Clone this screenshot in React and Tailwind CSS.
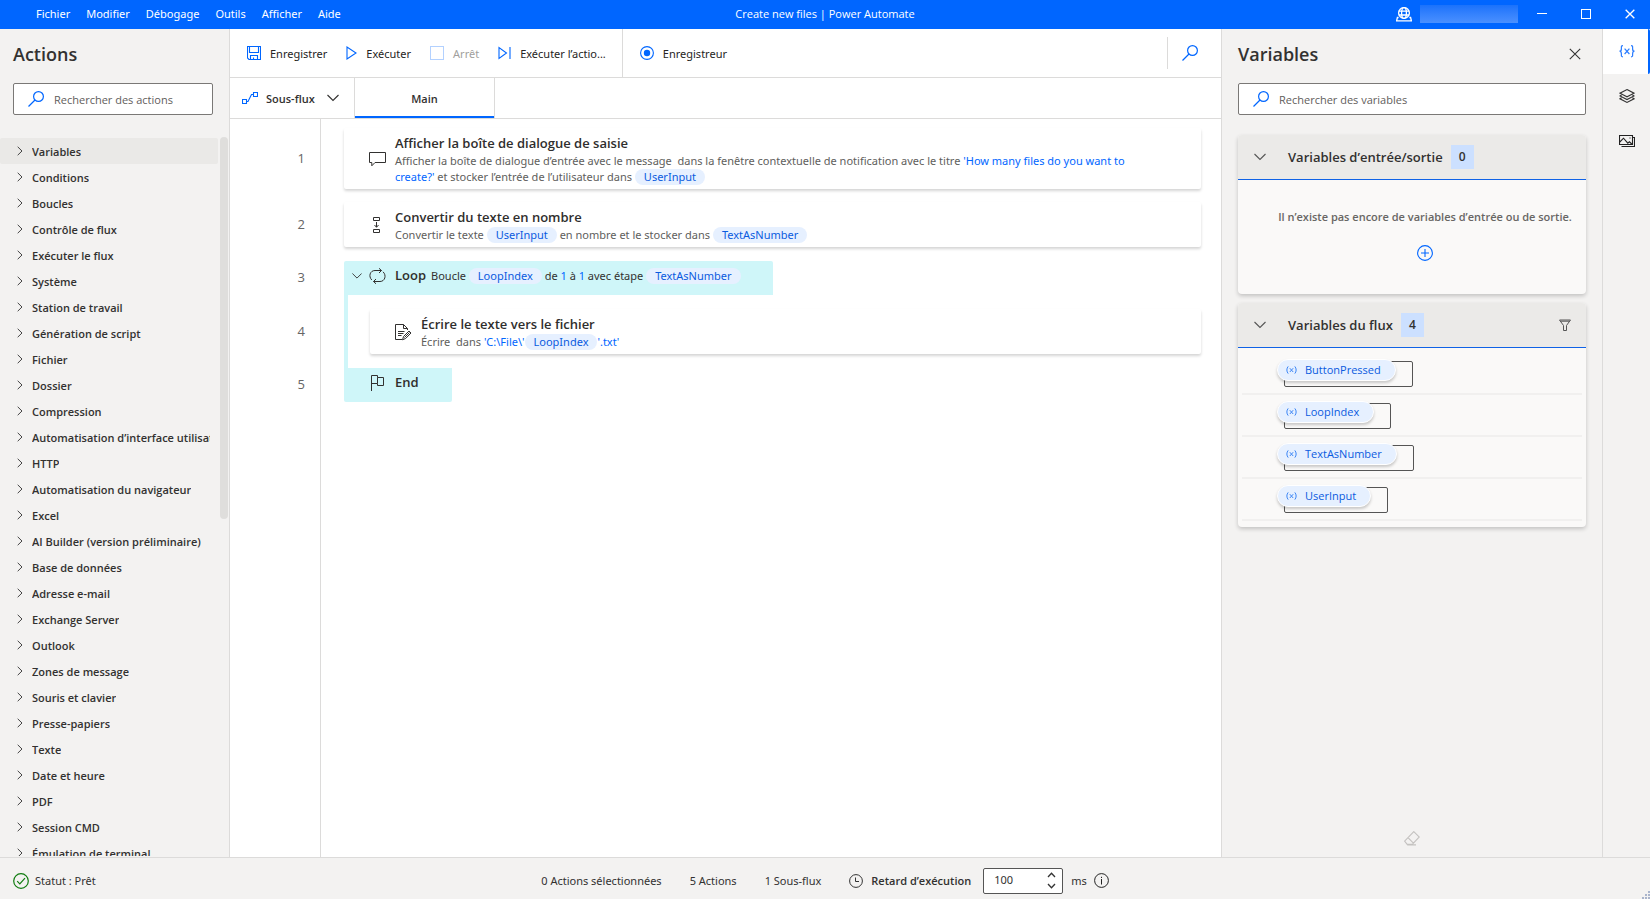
import React from "react";

const Svg = ({ w = 16, h = 16, className = "", children, ...rest }) => (
  <svg
    width={w}
    height={h}
    viewBox={`0 0 ${w} ${h}`}
    fill="none"
    stroke="currentColor"
    strokeWidth="1"
    aria-hidden="true"
    className={`shrink-0 ${className}`}
    {...rest}
  >
    {children}
  </svg>
);

const SearchIcon = ({ className = "" }) => (
  <Svg className={`text-[#0066ff] ${className}`} strokeWidth="1.2">
    <circle cx="10.5" cy="5.5" r="4.9" />
    <path d="M7 9 0.5 15.5" />
  </Svg>
);
const ChevronDown = ({ className = "" }) => (
  <Svg w={12} h={8} className={className} strokeWidth="1.1">
    <path d="M0.5 1 6 6.5 11.5 1" />
  </Svg>
);
const ChevronRight = () => (
  <Svg w={6} h={10} className="text-[#444]">
    <path d="M0.7 0.8 5 5 0.7 9.2" />
  </Svg>
);
const SaveIcon = () => (
  <Svg w={14} h={14} className="text-[#0066ff]" strokeWidth="1.1">
    <path d="M0.5 0.5H13.5V13.5H2L0.5 12ZM2.5 0.5V6.5H11.5V0.5M3.5 13.5V9.5H10.5V13.5M6.5 13.5V11.5" />
  </Svg>
);
const PlayIcon = () => (
  <Svg w={11} h={14} className="text-[#0066ff]" strokeWidth="1.1">
    <path d="M1 1V13L10 7Z" />
  </Svg>
);
const StopIcon = () => (
  <Svg w={14} h={14} className="text-[#b3d1ff]">
    <rect x="0.5" y="0.5" width="13" height="13" />
  </Svg>
);
const StepIcon = () => (
  <Svg w={13} h={14} className="text-[#0066ff]" strokeWidth="1.1">
    <path d="M1 1.5V12.5L8.5 7ZM12 1V13" />
  </Svg>
);
const RecordIcon = () => (
  <Svg w={14} h={14} className="text-[#0066ff]" strokeWidth="1.1">
    <circle cx="7" cy="7" r="6.4" />
    <circle cx="7" cy="7" r="3.2" fill="currentColor" stroke="none" />
  </Svg>
);
const SubflowIcon = () => (
  <Svg w={16} h={13} className="text-[#0066ff]" strokeWidth="1.1">
    <path d="M0.5 7.5H4.5V11.5H0.5ZM11.5 0.5H15.5V4.5H11.5ZM4.5 9.5H6L9.5 2.5H11.5" />
  </Svg>
);
const MessageIcon = () => (
  <Svg w={17} h={15}>
    <path d="M0.5 0.5H16.5V10.5H6L2.8 13.8V10.5H0.5Z" />
  </Svg>
);
const ConvertIcon = () => (
  <Svg w={17} h={17}>
    <path d="M4.5 0.5H10.5V3.5H4.5ZM4.5 12.5H10.5V15.5H4.5ZM7.5 5V10M5.5 8 7.5 10.3 9.5 8" />
  </Svg>
);
const LoopIcon = () => (
  <Svg w={17} h={16}>
    <path d="M2.8 12C-0.8 8.4 1 2.5 6 2.5H12.5M10 0.3 12.5 2.5 10 5M14 3.8C17.8 7.2 16 13.5 11 13.5H4.5M7 11 4.5 13.5 7 15.8" />
  </Svg>
);
const WriteIcon = () => (
  <Svg w={17} h={17}>
    <path d="M7 15.5H0.5V0.5H8.5L12.5 4.5V6M8.5 0.5V4.5H12.5M3 7.5H9.5M3 9.5H8.5M3 11.5H6.5" />
    <path d="M7.5 15.8 8.6 12.4 14 7 16 9 10.6 14.5ZM9.5 13.5 14.5 8.5" />
  </Svg>
);
const FlagIcon = () => (
  <Svg w={17} h={16}>
    <path d="M2.5 16V0.5H8.5V2.5H14.5V10.5H8.5V8.5H2.5M8.5 2.5V8.5" />
  </Svg>
);
const GlobeIcon = () => (
  <Svg w={16} h={15} className="text-white" strokeWidth="1.3">
    <circle cx="8" cy="6" r="5.4" />
    <ellipse cx="8" cy="6" rx="2.4" ry="5.4" />
    <path d="M2.7 4.2H13.3M2.7 8H13.3M2.6 10.5H1.4L0.6 13.8H15.4L14.6 10.5H13.4" />
  </Svg>
);
const CloseIcon = ({ w = 12, className = "" }) => (
  <svg width={w} height={w} viewBox="0 0 12 12" fill="none" stroke="currentColor" strokeWidth={w < 12 ? "1.6" : "1.1"} aria-hidden="true" className={className}>
    <path d="M0.8 0.8 11.2 11.2M11.2 0.8 0.8 11.2" />
  </svg>
);
const FilterIcon = () => (
  <Svg w={12} h={12} className="text-[#555]">
    <path d="M0.5 1H11.5L7.5 6.5V11.5H4.5V6.5ZM1.5 2.2H10.5" />
  </Svg>
);
const PlusCircle = () => (
  <Svg className="text-[#0066ff]" strokeWidth="1.1">
    <circle cx="8" cy="8" r="7.4" />
    <path d="M4 8H12M8 4V12" />
  </Svg>
);
const BracesIcon = () => (
  <Svg w={16} h={13} className="text-[#2b7dff]" strokeWidth="1.2">
    <path d="M4 0.6C2 0.6 2.4 1.6 2.4 3.4S2.4 6.2 0.5 6.2C2.4 6.2 2.4 7.2 2.4 9S2 11.8 4 11.8M12 0.6C14 0.6 13.6 1.6 13.6 3.4S13.6 6.2 15.5 6.2C13.6 6.2 13.6 7.2 13.6 9S14 11.8 12 11.8" />
    <path d="M5.6 3.6 10.4 9M10.4 3.6 5.6 9" />
  </Svg>
);
const ParenXIcon = () => (
  <Svg w={11} h={8} className="text-[#3b85f5]">
    <path d="M2.2 0.4C0.4 2.4 0.4 5.6 2.2 7.6M8.8 0.4C10.6 2.4 10.6 5.6 8.8 7.6M3.8 2.2 7.2 6M7.2 2.2 3.8 6" />
  </Svg>
);
const LayersIcon = () => (
  <Svg w={16} h={14} className="text-[#333]" strokeWidth="1.1">
    <path d="M8 0.6 15 4.2 8 7.8 1 4.2ZM2.5 6 1 7 8 10.6 15 7 13.5 6M2.5 8.8 1 9.8 8 13.4 15 9.8 13.5 8.8" />
  </Svg>
);
const ImagesIcon = () => (
  <Svg w={16} h={12} className="text-[#222]" strokeWidth="1.1">
    <path d="M0.5 0.5H13.5V9.5H0.5ZM2.5 11.5H15.5V2.5H14" />
    <path d="M0.8 7 4.5 3.2 8.8 8.2 10.4 6.8 12.8 9M11 2.5V3.5" />
  </Svg>
);
const EraserIcon = () => (
  <Svg w={16} h={15} className="text-[#c4c2c0]" strokeWidth="1.1">
    <path d="M9.8 0.6 15.3 6 8.2 13.4H3.2L0.6 10.2ZM4 6.6 9.4 12.2M3.2 13.9H12" />
  </Svg>
);
const CheckCircle = () => (
  <Svg className="text-[#107c10]" strokeWidth="1.2">
    <circle cx="8" cy="8" r="7.3" />
    <path d="M4.2 8.2 6.8 10.8 12 5.2" />
  </Svg>
);
const ClockIcon = () => (
  <Svg w={14} h={14} className="text-[#333]">
    <circle cx="7" cy="7" r="6.4" />
    <path d="M6.5 3.5V7.5H10" />
  </Svg>
);
const InfoIcon = () => (
  <Svg w={15} h={15} className="text-[#222]">
    <circle cx="7.5" cy="7.5" r="6.9" />
    <path d="M7.5 6V11.5M7.5 3.8V5" />
  </Svg>
);

const menus = ["Fichier", "Modifier", "Débogage", "Outils", "Afficher", "Aide"];

const groups = [
  "Variables",
  "Conditions",
  "Boucles",
  "Contrôle de flux",
  "Exécuter le flux",
  "Système",
  "Station de travail",
  "Génération de script",
  "Fichier",
  "Dossier",
  "Compression",
  "Automatisation d’interface utilisateur",
  "HTTP",
  "Automatisation du navigateur",
  "Excel",
  "AI Builder (version préliminaire)",
  "Base de données",
  "Adresse e-mail",
  "Exchange Server",
  "Outlook",
  "Zones de message",
  "Souris et clavier",
  "Presse-papiers",
  "Texte",
  "Date et heure",
  "PDF",
  "Session CMD",
  "Émulation de terminal",
];

const flowVariables = ["ButtonPressed", "LoopIndex", "TextAsNumber", "UserInput"];

const Pill = ({ children }) => (
  <span className="inline-block rounded-full bg-[#e6f0ff] px-[9px] leading-4 text-[#0a5be0]">{children}</span>
);
const Blue = ({ children }) => <span className="text-[#0066ff]">{children}</span>;

const SearchBox = ({ id, label }) => (
  <div className="flex h-8 items-center gap-[10px] rounded-xs border border-[#7a7876] bg-white pl-[14px]">
    <SearchIcon />
    <input
      id={id}
      type="search"
      aria-label={label}
      placeholder={label}
      className="h-full w-full min-w-0 bg-transparent outline-none placeholder:text-[#5f5d5b]"
    />
  </div>
);

const Line = ({ n, className = "", children }) => (
  <div className={`flex ${className}`}>
    <span className="flex w-[90px] shrink-0 items-center justify-end pr-[15px] text-[13px] text-[#666]">
      {n}
    </span>
    <div className="min-w-0 flex-1 pr-5 pl-6">{children}</div>
  </div>
);

const Card = ({ icon, title, children }) => (
  <div className="flex items-center rounded-xs bg-white pt-[5px] pr-10 pb-1 pl-[25px] shadow-[0_2px_3px_rgba(0,0,0,0.17)]">
    {icon}
    <div className="ml-[9px] min-w-0">
      <h3 className="text-[13px] leading-5 font-semibold text-[#2f2e2d]">{title}</h3>
      <p className="font-['Noto_Sans','Open_Sans',sans-serif] leading-4 text-[#605e5c]">{children}</p>
    </div>
  </div>
);

const ToolButton = ({ icon, children, disabled }) => (
  <button type="button" disabled={disabled} className="flex items-center gap-[9px] text-[#252423] disabled:text-[#a19f9d]">
    {icon}
    <span className="pt-[2px]">{children}</span>
  </button>
);

const VarPanel = ({ title, count, action, children }) => (
  <section className="overflow-hidden rounded-sm bg-[#faf9f8] shadow-[0_2px_4px_rgba(0,0,0,0.2)]">
    <header className="flex h-[45px] items-center border-b border-[#0f62e6] bg-[#ebeae8] pr-[15px] pl-4">
      <button type="button" aria-label={`Réduire ${title}`} className="text-[#555]">
        <ChevronDown />
      </button>
      <h3 className="ml-[22px] pt-px text-[13px] font-semibold text-[#323130]">{title}</h3>
      <span className="ml-2 flex h-6 w-[23px] items-center justify-center bg-[#cce0ff] text-xs font-semibold text-[#323130]">
        {count}
      </span>
      <span className="ml-auto flex">{action}</span>
    </header>
    {children}
  </section>
);

export default function App() {
  return (
    <div className="flex h-screen flex-col overflow-hidden bg-[#f3f2f1] font-['Open_Sans','Noto_Sans',sans-serif] text-[11px] text-[#323130]">
      <header className="grid h-[29px] shrink-0 grid-cols-[1fr_auto_1fr] items-center bg-[#0066ff] pb-px text-white">
        <nav className="flex gap-4 pl-9 font-['Noto_Sans','Open_Sans',sans-serif]">
          {menus.map((m) => (
            <button key={m} type="button">
              {m}
            </button>
          ))}
        </nav>
        <h1>Create new files | Power Automate</h1>
        <div className="flex items-center justify-end pr-[15px]">
          <GlobeIcon />
          <span className="ml-2 h-[18px] w-[98px] bg-linear-to-b from-[#1a72fb] to-[#4a90ff]" />
          <button type="button" aria-label="Réduire" className="ml-[19px]">
            <Svg w={10} h={10}>
              <path d="M0 4.5H10" />
            </Svg>
          </button>
          <button type="button" aria-label="Agrandir" className="ml-[34px]">
            <Svg w={10} h={10}>
              <rect x="0.5" y="0.5" width="9" height="9" />
            </Svg>
          </button>
          <button type="button" aria-label="Fermer" className="ml-[34px]">
            <CloseIcon w={10} />
          </button>
        </div>
      </header>

      <div className="flex min-h-0 flex-1">
        <aside className="flex w-[230px] shrink-0 flex-col border-r border-[#dcdbda]">
          <h2 className="px-[13px] pt-3 text-lg leading-[26px] font-semibold">Actions</h2>
          <div className="px-[13px] pt-4">
            <div className="w-[200px]">
              <SearchBox id="action-search" label="Rechercher des actions" />
            </div>
          </div>
          <div className="mt-[22px] mb-px flex min-h-0 flex-1 overflow-hidden">
            <ul className="min-w-0 flex-1 pt-px">
              {groups.map((g, i) => (
                <li key={g}>
                  <button
                    type="button"
                    className={`flex h-[26px] w-full items-center gap-[9px] pr-2 pl-[17px] text-left font-semibold ${i === 0 ? "rounded-xs bg-[#eae9e7]" : ""}`}
                  >
                    <ChevronRight />
                    <span className="overflow-hidden pt-[2px] whitespace-nowrap">{g}</span>
                  </button>
                </li>
              ))}
            </ul>
            <div className="ml-[2px] h-[382px] w-2 shrink-0 rounded-full bg-[#dfdedc]" />
            <div className="w-px shrink-0" />
          </div>
        </aside>

        <main className="flex min-w-0 flex-1 flex-col bg-white">
          <div className="flex h-[49px] shrink-0 items-stretch border-b border-[#dcdbda] font-['Noto_Sans','Open_Sans',sans-serif]">
            <div className="flex items-center gap-[19px] border-r border-[#dcdbda] pr-4 pl-[17px]">
              <ToolButton icon={<SaveIcon />}>Enregistrer</ToolButton>
              <ToolButton icon={<PlayIcon />}>Exécuter</ToolButton>
              <ToolButton icon={<StopIcon />} disabled>
                Arrêt
              </ToolButton>
              <ToolButton icon={<StepIcon />}>Exécuter l’actio...</ToolButton>
            </div>
            <div className="flex items-center pl-[17px]">
              <ToolButton icon={<RecordIcon />}>Enregistreur</ToolButton>
            </div>
            <div className="my-2 ml-auto flex items-center border-l border-[#dcdbda] pr-[23px] pl-[14px]">
              <button type="button" aria-label="Rechercher dans le flux">
                <SearchIcon />
              </button>
            </div>
          </div>

          <div className="flex h-[41px] shrink-0 items-stretch border-b border-[#dcdbda]">
            <button type="button" className="flex w-[125px] items-center gap-2 border-r border-[#dcdbda] pl-3 font-semibold">
              <SubflowIcon />
              <span className="pt-[2px]">Sous-flux</span>
              <ChevronDown className="ml-1" />
            </button>
            <div className="flex w-[140px] border-r border-[#dcdbda]">
              <button type="button" className="w-full border-b-2 border-[#0066ff] pt-1 font-semibold">
                Main
              </button>
            </div>
          </div>

          <div className="flex min-h-0 flex-1 bg-[linear-gradient(#dcdbda,#dcdbda)] bg-[length:1px_100%] bg-[position:90px_0] bg-no-repeat">
            <div className="flex min-w-0 flex-1 flex-col pt-[9px]">
              <Line n={1}>
                <Card icon={<MessageIcon />} title="Afficher la boîte de dialogue de saisie">
                  Afficher la boîte de dialogue d’entrée avec le message&nbsp; dans la fenêtre contextuelle de
                  notification avec le titre <Blue>'How many files do you want to create?'</Blue> et stocker
                  l’entrée de l’utilisateur dans <Pill>UserInput</Pill>
                </Card>
              </Line>
              <Line n={2} className="mt-[13px]">
                <Card icon={<ConvertIcon />} title="Convertir du texte en nombre">
                  Convertir le texte <Pill>UserInput</Pill> en nombre et le stocker dans <Pill>TextAsNumber</Pill>
                </Card>
              </Line>
              <Line n={3} className="mt-[14px]">
                <div className="flex h-[34px] w-[429px] items-center rounded-t-xs bg-[#cff6f9] pb-1 pl-2">
                  <button type="button" aria-label="Réduire la boucle" className="flex w-[17px] text-[#333]">
                    <ChevronDown className="w-[10px]" />
                  </button>
                  <LoopIcon />
                  <h3 className="ml-[9px] text-[13px] font-semibold text-[#2f2e2d]">Loop</h3>
                  <p className="ml-[5px] font-['Noto_Sans','Open_Sans',sans-serif] leading-4 whitespace-nowrap">
                    Boucle <Pill>LoopIndex</Pill> de <Blue>1</Blue> à <Blue>1</Blue> avec étape{" "}
                    <Pill>TextAsNumber</Pill>
                  </p>
                </div>
              </Line>
              <Line n={4}>
                <div className="border-l-4 border-[#cff6f9] py-[14px] pl-[22px]">
                  <Card icon={<WriteIcon />} title="Écrire le texte vers le fichier">
                    Écrire&nbsp; dans <Blue>'C:\File\'</Blue>
                    <Pill>LoopIndex</Pill>
                    <Blue>'.txt'</Blue>
                  </Card>
                </div>
              </Line>
              <Line n={5}>
                <div className="flex h-[34px] w-[108px] items-center rounded-b-xs bg-[#cff6f9] pb-1 pl-[25px]">
                  <FlagIcon />
                  <h3 className="ml-[9px] text-[13px] font-semibold text-[#2f2e2d]">End</h3>
                </div>
              </Line>
            </div>
          </div>
        </main>

        <aside className="flex w-[382px] shrink-0 flex-col border-x border-[#dcdbda] px-4">
          <div className="flex items-center justify-between pt-3 pr-[5px]">
            <h2 className="text-lg leading-[26px] font-semibold">Variables</h2>
            <button type="button" aria-label="Fermer le volet" className="text-[#333]">
              <CloseIcon />
            </button>
          </div>
          <div className="pt-4">
            <SearchBox id="variable-search" label="Rechercher des variables" />
          </div>
          <div className="mt-5 flex flex-col gap-[9px]">
            <VarPanel title="Variables d’entrée/sortie" count={0}>
              <div className="flex h-[114px] flex-col items-center gap-[19px] pt-7 pl-[26px]">
                <p className="leading-[18px] font-semibold whitespace-nowrap text-[#686664]">
                  Il n’existe pas encore de variables d’entrée ou de sortie.
                </p>
                <button type="button" aria-label="Ajouter une variable">
                  <PlusCircle />
                </button>
              </div>
            </VarPanel>
            <VarPanel
              title="Variables du flux"
              count={4}
              action={
                <button type="button" aria-label="Filtrer">
                  <FilterIcon />
                </button>
              }
            >
              <ul className="px-1 pt-[5px] pb-[6px]">
                {flowVariables.map((v) => (
                  <li key={v} className="flex h-[42px] items-start border-b-2 border-[#f1f0ef] pt-[6px] pl-[35px]">
                    <div className="relative">
                      <span className="absolute top-[2px] -right-[17px] left-[7px] h-[26px] rounded-xs border border-[#555]" />
                      <button
                        type="button"
                        className="relative flex h-[22px] items-center gap-2 rounded-full border border-white bg-[#e6f0ff] pr-[14px] pl-2 text-[#0a5be0] shadow-[0_2px_3px_rgba(0,0,0,0.2)]"
                      >
                        <ParenXIcon />
                        {v}
                      </button>
                    </div>
                  </li>
                ))}
              </ul>
            </VarPanel>
          </div>
          <button type="button" disabled aria-label="Effacer les valeurs" className="mt-auto mb-[11px] self-center">
            <EraserIcon />
          </button>
        </aside>

        <nav className="flex w-[47px] shrink-0 flex-col">
          <button type="button" aria-label="Variables" className="flex h-[45px] items-center justify-center rounded-r-xs border-r-2 border-[#0066ff] bg-white pb-px pl-[2px]">
            <BracesIcon />
          </button>
          <button type="button" aria-label="Éléments d’interface" className="flex h-[45px] items-center justify-center pb-[2px] pl-px">
            <LayersIcon />
          </button>
          <button type="button" aria-label="Images" className="flex h-[45px] items-center justify-center pb-[2px] pl-px">
            <ImagesIcon />
          </button>
        </nav>
      </div>

      <footer className="relative grid h-[42px] shrink-0 grid-cols-[1fr_auto_1fr] items-center border-t border-[#dcdbda] pt-1 font-['Noto_Sans','Open_Sans',sans-serif]">
        <div className="flex items-center gap-[6px] pl-[13px]">
          <CheckCircle />
          <span className="pt-px">Statut : Prêt</span>
        </div>
        <div className="flex items-center">
          <span className="pt-px">0 Actions sélectionnées</span>
          <span className="ml-7 pt-px">5 Actions</span>
          <span className="ml-7 pt-px">1 Sous-flux</span>
          <span className="ml-7 flex">
            <ClockIcon />
          </span>
          <label htmlFor="delay" className="ml-2 pt-px font-['Open_Sans','Noto_Sans',sans-serif] font-semibold">
            Retard d’exécution
          </label>
          <div className="ml-3 flex h-[26px] w-20 items-center rounded-xs border border-[#555] bg-white pr-[6px] pl-[10px]">
            <input id="delay" type="text" inputMode="numeric" defaultValue="100" className="w-full min-w-0 bg-transparent outline-none" />
            <div className="flex flex-col gap-[5px] text-[#333]">
              <button type="button" aria-label="Augmenter">
                <Svg w={9} h={6} strokeWidth="1.3">
                  <path d="M1 5 4.5 1.2 8 5" />
                </Svg>
              </button>
              <button type="button" aria-label="Diminuer">
                <Svg w={9} h={6} strokeWidth="1.3">
                  <path d="M1 1 4.5 4.8 8 1" />
                </Svg>
              </button>
            </div>
          </div>
          <span className="ml-2 pt-px">ms</span>
          <button type="button" aria-label="Informations" className="ml-[7px]">
            <InfoIcon />
          </button>
        </div>
        <Svg w={8} h={8} className="absolute right-0 bottom-0 text-[#a9b4cc]" strokeWidth="2">
          <path d="M0 7H8M3 4H8M6 1H8" strokeDasharray="2 1" />
        </Svg>
      </footer>
    </div>
  );
}
